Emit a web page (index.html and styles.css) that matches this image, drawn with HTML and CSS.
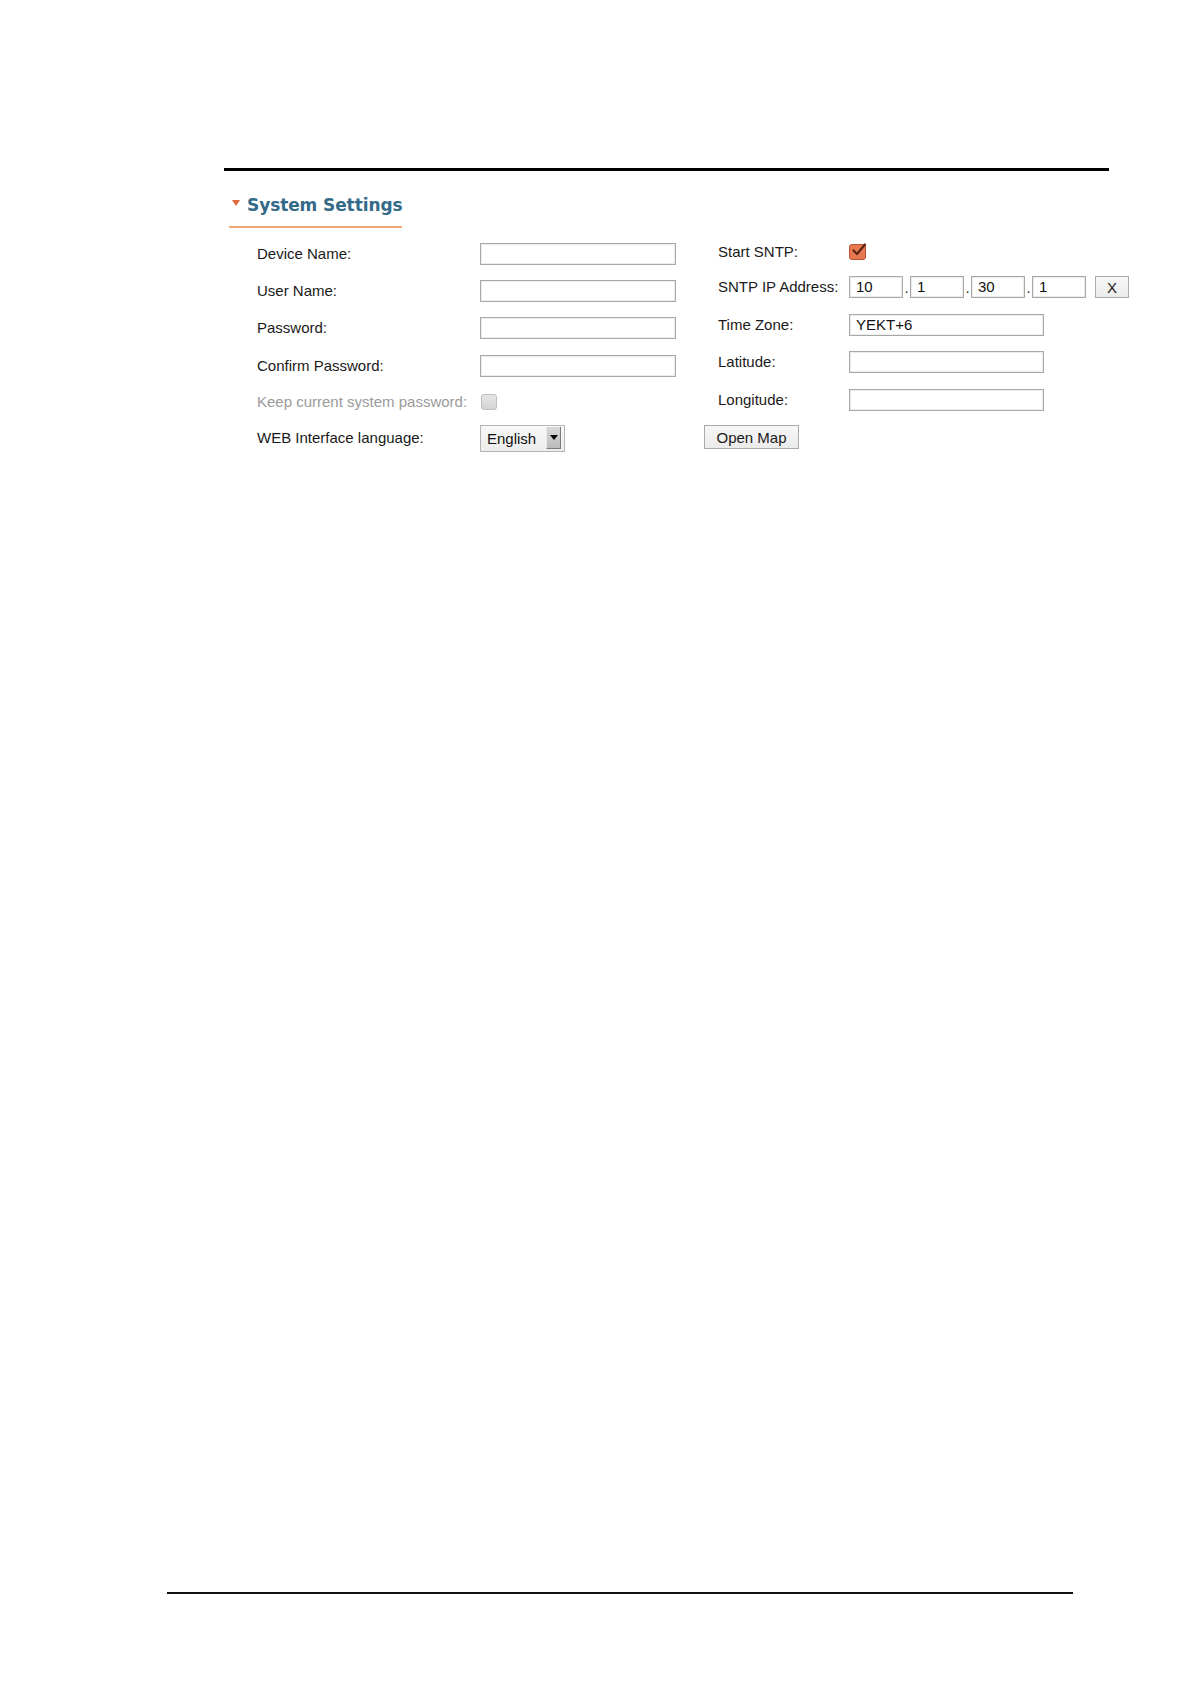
FILE: index.html
```html
<!DOCTYPE html>
<html lang="en">
<head>
<meta charset="utf-8">
<title>System Settings</title>
<link rel="stylesheet" href="styles.css">
</head>
<body>
<div class="page">
  <div class="rule-top"></div>
  <div class="section">
    <div class="heading">
      <span class="tri"></span>
      <span class="title">System Settings</span>
    </div>
    <div class="form">
      <div class="grid left">
        <div class="label">Device Name:</div>
        <div class="field"><div class="input wide"></div></div>
        <div class="label">User Name:</div>
        <div class="field"><div class="input wide"></div></div>
        <div class="label">Password:</div>
        <div class="field"><div class="input wide"></div></div>
        <div class="label">Confirm Password:</div>
        <div class="field"><div class="input wide"></div></div>
        <div class="label muted">Keep current system password:</div>
        <div class="field"><div class="cb-grey"></div></div>
        <div class="label">WEB Interface language:</div>
        <div class="field">
          <div class="select"><span class="sel-text">English</span><span class="sel-btn"><span class="sel-arrow"></span></span></div>
        </div>
      </div>
      <div class="grid right">
        <div class="label">Start SNTP:</div>
        <div class="field">
          <div class="cb-orange">
            <svg width="20" height="18" viewBox="0 0 20 18"><path d="M4.5 9.5 L8 13 L16 3.5" fill="none" stroke="#5a2414" stroke-width="2.2" stroke-linecap="round" stroke-linejoin="round"/></svg>
          </div>
        </div>
        <div class="label">SNTP IP Address:</div>
        <div class="field ip">
          <div class="input oct">10</div><span class="dot">.</span>
          <div class="input oct">1</div><span class="dot">.</span>
          <div class="input oct">30</div><span class="dot">.</span>
          <div class="input oct">1</div>
          <div class="btn xbtn">X</div>
        </div>
        <div class="label">Time Zone:</div>
        <div class="field"><div class="input tz">YEKT+6</div></div>
        <div class="label">Latitude:</div>
        <div class="field"><div class="input tz"></div></div>
        <div class="label">Longitude:</div>
        <div class="field"><div class="input tz"></div></div>
        <div class="mapcell"><div class="btn mapbtn">Open Map</div></div>
      </div>
    </div>
  </div>
  <div class="rule-bottom"></div>
</div>
</body>
</html>
```
FILE: styles.css
```css
html, body {
  margin: 0;
  padding: 0;
  background: #ffffff;
}
body {
  font-family: "Liberation Sans", Arial, sans-serif;
  font-size: 15px;
  color: #1a1a1a;
}
.page {
  display: flex;
  flex-direction: column;
  min-height: 1684px;
  box-sizing: border-box;
  padding-top: 168px;
  padding-bottom: 90px;
}
.rule-top {
  margin-left: 224px;
  width: 885px;
  height: 3px;
  background: #000;
}
.rule-bottom {
  margin-top: auto;
  margin-left: 167px;
  width: 906px;
  height: 2px;
  background: #111;
}
.section {
  margin-left: 229px;
}
.heading {
  margin-top: 24px;
  width: 173px;
  display: flex;
  align-items: center;
  padding-bottom: 11px;
  border-bottom: 2px solid #efa670;
  height: 20px;
  white-space: nowrap;
}
.tri {
  flex: none;
  width: 0;
  height: 0;
  margin-left: 3px;
  margin-right: 7px;
  margin-top: -4px;
  border-left: 4.5px solid transparent;
  border-right: 4.5px solid transparent;
  border-top: 6px solid #e2693c;
}
.title {
  flex: none;
  font-family: "DejaVu Sans", Verdana, sans-serif;
  font-weight: bold;
  font-size: 17px;
  line-height: 20px;
  color: #336a88;
  letter-spacing: -0.1px;
  white-space: nowrap;
}
.form {
  display: flex;
  margin-top: 7px;
}
.grid {
  display: grid;
  align-items: center;
}
.left {
  margin-left: 28px;
  grid-template-columns: 223px 196px;
  grid-template-rows: repeat(4, 37.33px) 35.3px 37.33px;
}
.right {
  margin-left: 42px;
  grid-template-columns: 131px auto;
  grid-template-rows: 33.5px repeat(5, 37.5px);
}
.label {
  white-space: nowrap;
  line-height: 18px;
}
.muted {
  color: #9a9a9a;
}
.field {
  display: flex;
  align-items: center;
}
.input {
  box-sizing: border-box;
  height: 22px;
  border: 1px solid #a8a8a8;
  box-shadow: inset 0 0 0 1px #ececec;
  background: #fff;
  padding: 0 6px;
  line-height: 20px;
  font-size: 15px;
  color: #111;
}
.wide {
  width: 196px;
}
.tz {
  width: 195px;
}
.oct {
  width: 54px;
}
.dot {
  width: 7px;
  text-align: center;
  line-height: 22px;
  padding-top: 2px;
}
.xbtn {
  margin-left: 9px;
  width: 34px;
  height: 22px;
}
.btn {
  box-sizing: border-box;
  border: 1px solid #aaaaaa;
  background: linear-gradient(#f7f7f7, #ebebeb);
  display: flex;
  align-items: center;
  justify-content: center;
  font-size: 15px;
  color: #1a1a1a;
}
.mapcell {
  grid-column: 1 / span 2;
  display: flex;
  align-items: center;
}
.mapbtn {
  margin-left: -14px;
  width: 95px;
  height: 24px;
}
.cb-grey {
  box-sizing: border-box;
  width: 16px;
  height: 16px;
  margin-left: 1px;
  border: 1px solid #bdbdbd;
  border-radius: 3px;
  background: linear-gradient(#e6e6e6, #d4d4d4);
}
.cb-orange {
  position: relative;
  box-sizing: border-box;
  width: 17px;
  height: 16px;
  margin-top: 1px;
  border: 1px solid #b5532f;
  border-radius: 3px;
  background: #e8784f;
}
.cb-orange svg {
  position: absolute;
  left: -1px;
  top: -4px;
}
.select {
  box-sizing: border-box;
  width: 85px;
  height: 27px;
  border: 1px solid #b4b4b4;
  background: linear-gradient(#f9f9f9, #ececec);
  display: flex;
  align-items: center;
  justify-content: space-between;
  padding-left: 6px;
  padding-right: 3px;
}
.sel-text {
  font-size: 15px;
  color: #111;
}
.sel-btn {
  box-sizing: border-box;
  width: 15px;
  height: 22px;
  background: linear-gradient(#d8d8d8, #bcbcbc);
  border-left: 1px solid #e8e8e8;
  border-right: 1px solid #7a7a7a;
  border-bottom: 1px solid #7a7a7a;
  display: flex;
  align-items: center;
  justify-content: center;
}
.sel-arrow {
  width: 0;
  height: 0;
  border-left: 4px solid transparent;
  border-right: 4px solid transparent;
  border-top: 5px solid #000;
}
```
